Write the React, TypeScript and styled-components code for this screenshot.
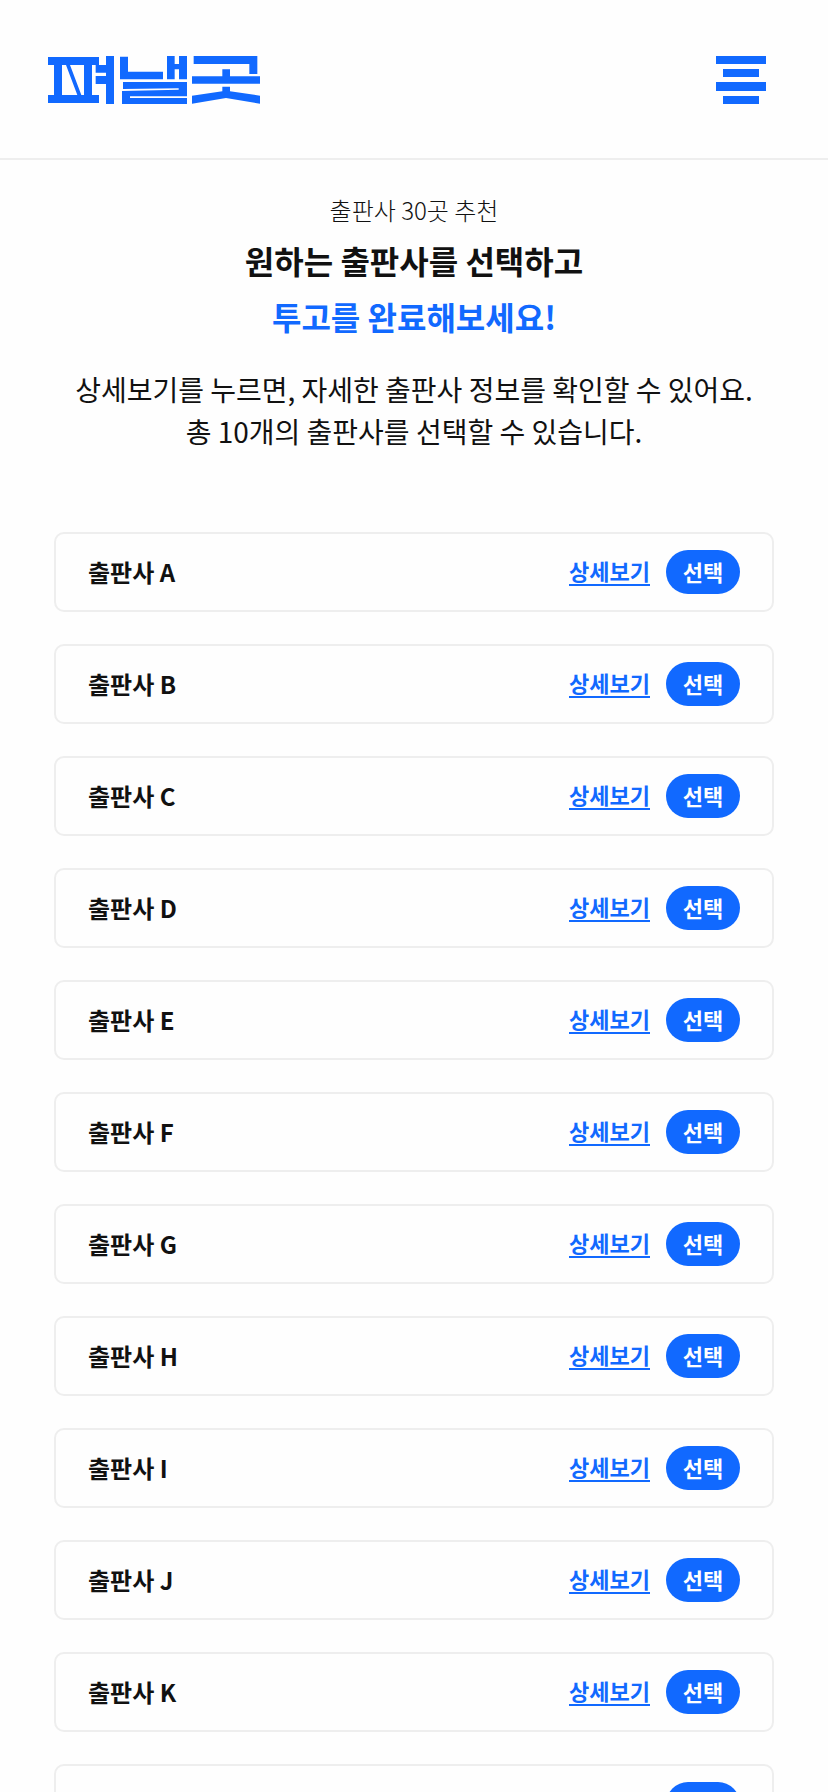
import React from "react";
import styled, { createGlobalStyle } from "styled-components";

const blue = "#1169ff";
const ink = "#111111";
const line = "#eeeeee";

const GlobalStyle = createGlobalStyle`
  *, *::before, *::after { box-sizing: border-box; }
  body {
    margin: 0;
    background: #fefefe;
    color: ${ink};
    font-family: "Noto Sans CJK KR", "Noto Sans", sans-serif;
  }
`;

const Header = styled.header`
  display: flex;
  align-items: center;
  justify-content: space-between;
  padding: 56px 62px 54px 48px;
  border-bottom: 2px solid ${line};
`;

const HomeLink = styled.a`
  display: flex;
`;

const MenuButton = styled.button`
  display: flex;
  padding: 0;
  border: 0;
  background: none;
  cursor: pointer;
`;

const Intro = styled.section`
  display: flex;
  flex-direction: column;
  align-items: center;
  padding: 32px 24px 0;
  text-align: center;
`;

const Eyebrow = styled.p`
  margin: 0;
  font-size: 24px;
  font-weight: 300;
  line-height: 36px;
`;

const Title = styled.h1`
  margin: 4px 0 0;
  font-size: 32px;
  font-weight: 700;
  line-height: 56px;
`;

const Accent = styled.span`
  display: block;
  color: ${blue};
`;

const Guide = styled.p`
  margin: 24px 0 0;
  font-size: 28px;
  line-height: 42px;
`;

const List = styled.ul`
  display: flex;
  flex-direction: column;
  gap: 32px;
  margin: 0;
  padding: 80px 54px 32px;
  list-style: none;
`;

const Card = styled.li`
  display: flex;
  align-items: center;
  gap: 16px;
  height: 80px;
  padding: 0 32px;
  border: 2px solid ${line};
  border-radius: 10px;
`;

const Name = styled.h2`
  flex: 1;
  margin: 0;
  font-size: 24px;
  font-weight: 700;
  line-height: 32px;
`;

const DetailLink = styled.a`
  padding-bottom: 2px;
  border-bottom: 2px solid ${blue};
  color: ${blue};
  font-size: 22px;
  font-weight: 700;
  line-height: 24px;
  text-decoration: none;
`;

const SelectButton = styled.button`
  width: 74px;
  height: 44px;
  padding: 0 0 2px;
  border: 0;
  border-radius: 22px;
  background: ${blue};
  color: #ffffff;
  font-family: inherit;
  font-size: 22px;
  font-weight: 700;
  line-height: 32px;
  cursor: pointer;
`;

const Logo = () => (
  <svg width="212" height="48" viewBox="0 0 636 144" fill={blue} aria-hidden="true">
    <path d="M0 3H153V27H132V117H153V141H0V117H18V27H0ZM42 27V117H88L54 27ZM66 27L100 117H108V27Z" fillRule="evenodd" />
    <path d="M174 0H198V144H174V84H143V60H174V50H143V27H174Z" />
    <path d="M216 2H240V47H345V70H216Z" />
    <path d="M357 0H380V24H393V0H417V70H393V40H380V70H357Z" />
    <path d="M225 78H417V121L246 121V126H417V144H222V105L392 101V97L225 99Z" />
    <path d="M437 0H628V54H604V24H437Z" />
    <path d="M523 40H546V61H636V83H432V61H523Z" />
    <path d="M523 92H546V106L636 119V143L534 126L432 143V119L523 106Z" />
  </svg>
);

const MenuIcon = () => (
  <svg width="50" height="48" viewBox="0 0 50 48" fill={blue} aria-hidden="true">
    <path d="M0 0H50V8H0ZM7 13H43V21H7ZM0 26H50V35H0ZM7 40H43V48H7Z" />
  </svg>
);

const publishers = ["A", "B", "C", "D", "E", "F", "G", "H", "I", "J", "K", "L"];

export default function App() {
  return (
    <>
      <GlobalStyle />
      <Header>
        <HomeLink href="#" aria-label="펴낼곳">
          <Logo />
        </HomeLink>
        <MenuButton type="button" aria-label="메뉴">
          <MenuIcon />
        </MenuButton>
      </Header>
      <main>
        <Intro>
          <Eyebrow>출판사 30곳 추천</Eyebrow>
          <Title>
            원하는 출판사를 선택하고
            <Accent>투고를 완료해보세요!</Accent>
          </Title>
          <Guide>
            상세보기를 누르면, 자세한 출판사 정보를 확인할 수 있어요.
            <br />총 10개의 출판사를 선택할 수 있습니다.
          </Guide>
        </Intro>
        <List>
          {publishers.map((letter) => (
            <Card key={letter}>
              <Name>출판사 {letter}</Name>
              <DetailLink href={`#publisher-${letter}`}>상세보기</DetailLink>
              <SelectButton type="button">선택</SelectButton>
            </Card>
          ))}
        </List>
      </main>
    </>
  );
}
